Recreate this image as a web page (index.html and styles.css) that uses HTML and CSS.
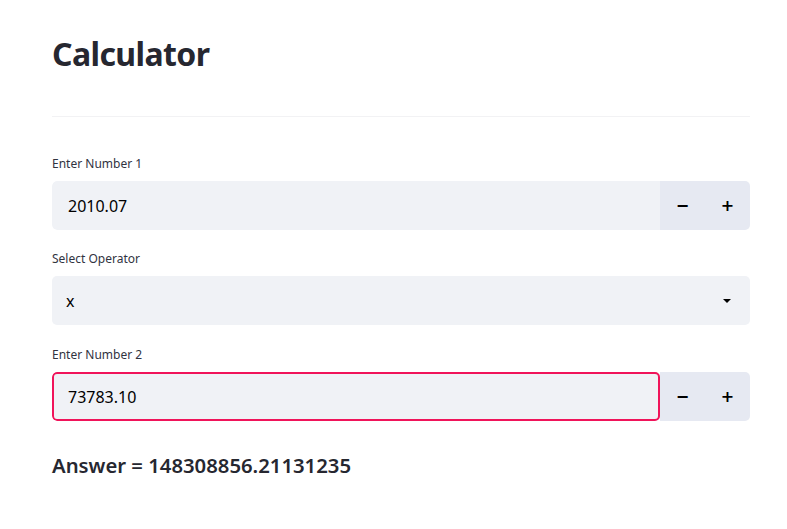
FILE: index.html
```html
<!DOCTYPE html>
<html>
<head>
<meta charset="utf-8">
<link rel="stylesheet" href="styles.css">
</head>
<body>
<main class="app">
  <h1 class="title">Calculator</h1>
  <hr class="divider">
  <div class="field">
    <label class="label">Enter Number 1</label>
    <div class="number">
      <div class="num-input"><span>2010.07</span></div>
      <div class="steppers">
        <button class="step">&minus;</button>
        <button class="step">+</button>
      </div>
    </div>
  </div>
  <div class="field">
    <label class="label">Select Operator</label>
    <div class="select">
      <span>x</span>
      <svg class="caret" width="10" height="6" viewBox="0 0 10 6"><path d="M1 1h8L5 5z" fill="#000"/></svg>
    </div>
  </div>
  <div class="field field-last">
    <label class="label">Enter Number 2</label>
    <div class="number">
      <div class="num-input focused"><span>73783.10</span></div>
      <div class="steppers">
        <button class="step">&minus;</button>
        <button class="step">+</button>
      </div>
    </div>
  </div>
  <p class="answer">Answer = 148308856.21131235</p>
</main>
</body>
</html>
```
FILE: styles.css
```css
* { box-sizing: border-box; }
body {
  margin: 0;
  background: #fff;
  font-family: "Noto Sans", "Open Sans", sans-serif;
  color: #31333f;
}
.app {
  width: 698px;
  margin-left: 52px;
  padding-top: 30px;
  display: flex;
  flex-direction: column;
}
.title {
  margin: 0;
  font-size: 32px;
  font-weight: 700;
  line-height: 48px;
  color: #262730;
  letter-spacing: -0.6px;
}
.divider {
  border: none;
  border-top: 1px solid #f2f2f4;
  margin: 38px 0 0 0;
  height: 0;
}
.field {
  display: flex;
  flex-direction: column;
}
.divider + .field { margin-top: 36px; }
.field + .field { margin-top: 18px; }
.field-last { margin-top: 19px !important; }
.label {
  font-size: 12px;
  line-height: 18px;
  padding-top: 2px;
  color: #31333f;
  margin-bottom: 8px;
}
.number {
  display: flex;
  height: 49px;
  border-radius: 5px;
  overflow: hidden;
}
.num-input {
  flex: 1;
  background: #f0f2f6;
  display: flex;
  align-items: center;
  padding-left: 16px;
  font-size: 16px;
  color: #000;
  border-radius: 5px 0 0 5px;
}
.num-input.focused {
  border: 2px solid #f0145a;
  padding-left: 14px;
  border-radius: 5px;
}
.steppers {
  display: flex;
  width: 90px;
  background: #e6e9f2;
}
.step {
  flex: 1;
  border: none;
  background: transparent;
  font-family: "DejaVu Sans", sans-serif;
  font-size: 16px;
  font-weight: 700;
  color: #000;
  padding: 0;
}
.select {
  height: 49px;
  background: #f0f2f6;
  border-radius: 5px;
  display: flex;
  align-items: center;
  justify-content: space-between;
  padding: 0 18px 0 14px;
  font-size: 16px;
  color: #000;
}
.caret { display: block; }
.answer {
  margin: 32px 0 0 0;
  font-size: 20.3px;
  font-weight: 600;
  line-height: 25px;
  color: #262730;
}
```
